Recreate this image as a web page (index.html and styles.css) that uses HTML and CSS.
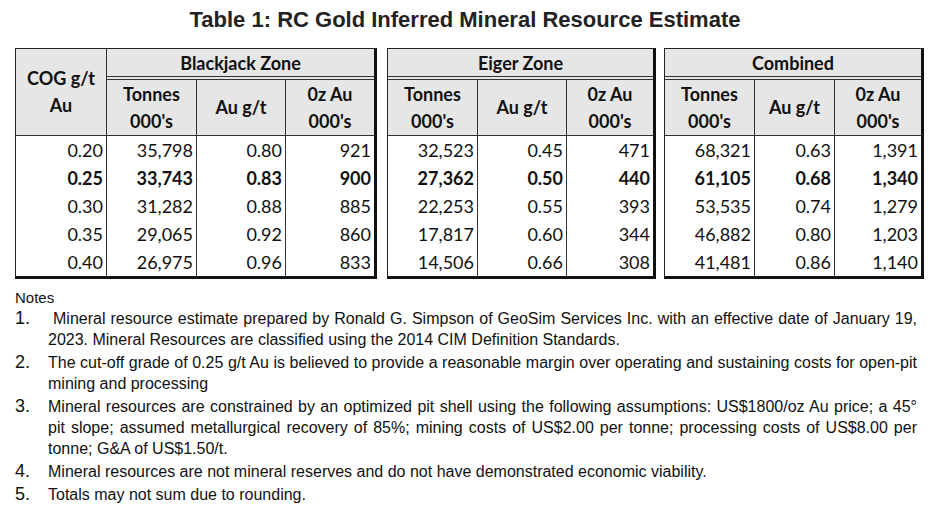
FILE: index.html
```html
<!DOCTYPE html>
<html>
<head>
<meta charset="utf-8">
<link rel="stylesheet" href="styles.css">
</head>
<body>
<h1 class="title">Table 1: RC Gold Inferred Mineral Resource Estimate</h1>
<div class="tables">
  <table class="grid t1">
    <colgroup><col class="c91"><col class="c89"><col class="c89"><col class="c89"></colgroup>
    <tr class="zone-row"><th class="cog" rowspan="2">COG g/t<br>Au</th><th class="zone" colspan="3">Blackjack Zone</th></tr>
    <tr class="sub-row"><th>Tonnes<br>000's</th><th>Au g/t</th><th>0z Au<br>000's</th></tr>
    <tr><td>0.20</td><td>35,798</td><td>0.80</td><td>921</td></tr>
    <tr class="bold"><td>0.25</td><td>33,743</td><td>0.83</td><td>900</td></tr>
    <tr><td>0.30</td><td>31,282</td><td>0.88</td><td>885</td></tr>
    <tr><td>0.35</td><td>29,065</td><td>0.92</td><td>860</td></tr>
    <tr><td>0.40</td><td>26,975</td><td>0.96</td><td>833</td></tr>
  </table>
  <table class="grid t2">
    <colgroup><col class="c89"><col class="c89"><col class="c87"></colgroup>
    <tr class="zone-row"><th class="zone" colspan="3">Eiger Zone</th></tr>
    <tr class="sub-row"><th>Tonnes<br>000's</th><th>Au g/t</th><th>0z Au<br>000's</th></tr>
    <tr><td>32,523</td><td>0.45</td><td>471</td></tr>
    <tr class="bold"><td>27,362</td><td>0.50</td><td>440</td></tr>
    <tr><td>22,253</td><td>0.55</td><td>393</td></tr>
    <tr><td>17,817</td><td>0.60</td><td>344</td></tr>
    <tr><td>14,506</td><td>0.66</td><td>308</td></tr>
  </table>
  <table class="grid t3">
    <colgroup><col class="c89"><col class="c80"><col class="c87"></colgroup>
    <tr class="zone-row"><th class="zone" colspan="3">Combined</th></tr>
    <tr class="sub-row"><th>Tonnes<br>000's</th><th>Au g/t</th><th>0z Au<br>000's</th></tr>
    <tr><td>68,321</td><td>0.63</td><td>1,391</td></tr>
    <tr class="bold"><td>61,105</td><td>0.68</td><td>1,340</td></tr>
    <tr><td>53,535</td><td>0.74</td><td>1,279</td></tr>
    <tr><td>46,882</td><td>0.80</td><td>1,203</td></tr>
    <tr><td>41,481</td><td>0.86</td><td>1,140</td></tr>
  </table>
</div>
<div class="notes">
  <div class="notes-head">Notes</div>
  <ol class="note-list">
    <li><span class="num">1.</span><span class="txt">&nbsp;Mineral resource estimate prepared by Ronald G. Simpson of GeoSim Services Inc. with an effective date of January 19, 2023. Mineral Resources are classified using the 2014 CIM Definition Standards.</span></li>
    <li><span class="num">2.</span><span class="txt">The cut-off grade of 0.25 g/t Au is believed to provide a reasonable margin over operating and sustaining costs for open-pit mining and processing</span></li>
    <li><span class="num">3.</span><span class="txt">Mineral resources are constrained by an optimized pit shell using the following assumptions: US$1800/oz Au price; a 45° pit slope; assumed metallurgical recovery of 85%; mining costs of US$2.00 per tonne; processing costs of US$8.00 per tonne; G&amp;A of US$1.50/t.</span></li>
    <li><span class="num">4.</span><span class="txt">Mineral resources are not mineral reserves and do not have demonstrated economic viability.</span></li>
    <li><span class="num">5.</span><span class="txt">Totals may not sum due to rounding.</span></li>
  </ol>
</div>
</body>
</html>
```
FILE: styles.css
```css
* { box-sizing: border-box; }
html, body { margin: 0; padding: 0; background: #fff; }
body { width: 938px; height: 515px; overflow: hidden; font-family: "Liberation Sans", Arial, sans-serif; color: #111; }

.title {
  margin: 0;
  padding: 7px 8px 0 0;
  height: 48px;
  text-align: center;
  font-size: 22px;
  line-height: 26px;
  font-weight: bold;
  color: #222;
}

.tables {
  display: flex;
  padding-left: 15px;
  align-items: flex-start;
}
.t2 { margin-left: 10px; }
.t3 { margin-left: 8px; }

.grid {
  border-collapse: separate;
  border-spacing: 0;
  table-layout: fixed;
  font-family: Lato, "Open Sans", sans-serif;
  font-size: 18px;
  color: #111;
  border-top: 1px solid #222;
  border-left: 1px solid #222;
  border-right: 3px solid #111;
  border-bottom: 3px solid #111;
}
.c91 { width: 91px; }
.c89 { width: 89px; }
.c87 { width: 87px; }
.c80 { width: 80px; }

.grid th {
  background: #e6e6e6;
  font-weight: bold;
  text-align: center;
  padding: 0;
  line-height: 27px;
}
.grid .zone-row th.zone {
  height: 31px;
  border-bottom: 4px double #333;
  vertical-align: middle;
  line-height: 26px;
}
.grid th.cog {
  border-right: 1px solid #333;
  border-bottom: 1px solid #333;
  vertical-align: middle;
}
.grid .sub-row th {
  height: 56px;
  border-bottom: 1px solid #333;
  vertical-align: middle;
}
.grid .sub-row th + th { border-left: 1px solid #333; }

.grid td {
  height: 28px;
  padding: 0 3px 0 0;
  text-align: right;
  line-height: 28px;
  vertical-align: bottom;
}
.grid td + td { border-left: 1px solid #333; }
.t1 td:first-child { border-right: 1px solid #333; }
.t1 td:nth-child(2) { border-left: none; }
.grid tr.bold td { font-weight: bold; }

.notes {
  padding: 8px 21px 0 15px;
  font-size: 16px;
  line-height: 21px;
  color: #111;
}
.notes-head { font-size: 15px; line-height: 21px; }
.note-list {
  margin: 0;
  padding: 0;
  list-style: none;
}
.note-list li {
  display: grid;
  grid-template-columns: 33px 1fr;
  margin-bottom: 2px;
}
.num { font-size: 18px; line-height: 21px; }
.txt { text-align: justify; }
```
